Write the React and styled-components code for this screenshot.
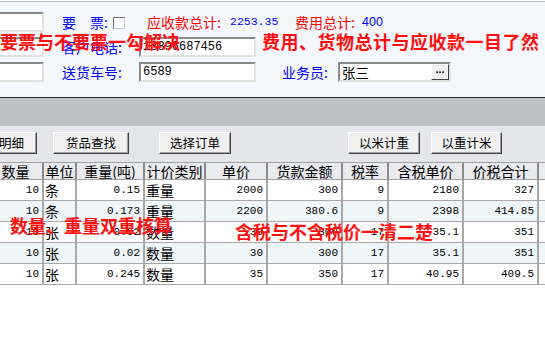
import React from 'react';
import styled, { createGlobalStyle } from 'styled-components';

const Global = createGlobalStyle`
  html, body { margin: 0; padding: 0; background: #fff; }
  body { width: 545px; height: 354px; overflow: hidden; font-family: "Noto Sans CJK SC", sans-serif; }
  #root { width: 545px; height: 354px; overflow: hidden; }
`;

const Page = styled.div`
  position: relative;
  width: 545px;
  height: 354px;
  overflow: hidden;
  background: #fff;
`;

const Top = styled.section`
  box-sizing: border-box;
  height: 97px;
  margin-top: 1px;
  background: #f4f8fc;
  border-top: 1px solid #b4b8c0;
  border-bottom: 1px solid #303030;
  padding-top: 10px;
`;

const Form = styled.div`
  display: flex;
  flex-direction: column;
  gap: 5px;
  margin-left: -60px;
`;

const FormRow = styled.div`
  display: flex;
  align-items: center;
  height: 20px;
`;

const TextBox = styled.div`
  box-sizing: border-box;
  flex-shrink: 0;
  width: ${p => p.$w}px;
  height: 20px;
  margin-left: ${p => p.$ml || 0}px;
  background: #fff;
  border: 2px solid;
  border-color: #8a8a8a #e2e2e2 #e2e2e2 #8a8a8a;
  display: flex;
  align-items: center;
  padding-left: 2px;
  font-family: ${p => (p.$cjk ? '"Noto Sans CJK SC", sans-serif' : '"Liberation Mono", monospace')};
  font-size: ${p => (p.$cjk ? '13.5px' : '12px')};
  line-height: 16px;
  color: #000;
`;

const DotsButton = styled.div`
  box-sizing: border-box;
  margin-left: auto;
  width: 18px;
  height: 16px;
  background: #f0f0f0;
  border: 1px solid;
  border-color: #fff #404040 #404040 #fff;
  font-family: "Liberation Sans", sans-serif;
  font-weight: 700;
  font-size: 11px;
  line-height: 9px;
  text-align: center;
  color: #000;
`;

const Label = styled.span`
  flex-shrink: 0;
  display: block;
  width: ${p => p.$w}px;
  margin-left: ${p => p.$ml || 0}px;
  color: ${p => (p.$red ? '#ff0000' : '#0000ff')};
  font-family: "Noto Sans CJK SC", sans-serif;
  font-size: 14px;
  line-height: 20px;
  white-space: nowrap;
`;

const Value = styled.span`
  flex-shrink: 0;
  display: block;
  width: ${p => p.$w}px;
  color: #0000ff;
  font-family: ${p => (p.$mono ? '"Liberation Mono", monospace' : '"Liberation Sans", sans-serif')};
  font-size: ${p => (p.$mono ? '11.5px' : '12.5px')};
  line-height: 20px;
  white-space: nowrap;
`;

const Check = styled.span`
  flex-shrink: 0;
  box-sizing: border-box;
  display: block;
  width: 12px;
  height: 12px;
  margin-top: 2px;
  background: #fff;
  border: 1px solid;
  border-color: #707070 #c8c8c8 #c8c8c8 #707070;
`;

const Caption = styled.div`
  height: 28px;
  background: #c0c0c8;
`;

const Toolbar = styled.div`
  box-sizing: border-box;
  height: 36px;
  background: #e4e6ea;
  padding-top: 6px;
  display: flex;
  margin-left: -39px;
`;

const Button = styled.div`
  box-sizing: border-box;
  flex-shrink: 0;
  width: ${p => p.$w}px;
  height: 22px;
  margin-left: ${p => p.$ml || 0}px;
  background: #f0f0f0;
  border: 1px solid;
  border-color: #ffffff #404040 #404040 #ffffff;
  box-shadow: inset -1px -1px 0 #a0a0a0;
  font-family: "Noto Sans CJK SC", sans-serif;
  font-size: 12.5px;
  line-height: 19px;
  text-align: center;
  color: #000;
`;

const cols = [
  { w: 55, num: true },
  { w: 33 },
  { w: 68, num: true },
  { w: 61 },
  { w: 62, num: true },
  { w: 75, num: true },
  { w: 46, num: true },
  { w: 75, num: true },
  { w: 75, num: true },
  { w: 60 },
];

const Grid = styled.div`
  display: grid;
  grid-template-columns: ${cols.map(c => c.w + 'px').join(' ')};
  margin-left: -11px;
  width: max-content;
`;

const HeadCell = styled.div`
  box-sizing: border-box;
  height: 18px;
  background: #e9eaed;
  border-top: 1px solid #a0a0a0;
  border-bottom: 1px solid #a0a0a0;
  border-right: 2px solid #8a8a8a;
  font-family: "Noto Sans CJK SC", sans-serif;
  font-size: 14px;
  line-height: 16px;
  text-align: center;
  color: #000;
  white-space: nowrap;
  overflow: hidden;
`;

const Cell = styled.div`
  box-sizing: border-box;
  height: 21px;
  background: ${p => (p.$tint ? '#eef6f7' : '#ffffff')};
  border-bottom: 1px solid #a8a8a8;
  border-right: 2px solid #a8a8a8;
  display: flex;
  align-items: center;
  justify-content: ${p => (p.$num ? 'flex-end' : 'flex-start')};
  padding: ${p => (p.$num ? '0 3px 0 0' : '0 0 0 1px')};
  font-family: ${p => (p.$num ? '"Liberation Mono", monospace' : '"Noto Sans CJK SC", sans-serif')};
  font-size: ${p => (p.$num ? '11px' : '14px')};
  color: #000;
  white-space: nowrap;
  overflow: hidden;
`;

const Note = styled.div`
  position: absolute;
  left: ${p => p.$x}px;
  top: ${p => p.$y}px;
  color: #ff1010;
  font-family: "Noto Sans CJK SC", sans-serif;
  font-weight: 700;
  font-size: 18px;
  letter-spacing: ${p => p.$ls || 0}px;
  line-height: 18px;
  white-space: nowrap;
  z-index: 2;
`;

const headers = ['数量', '单位', '重量(吨)', '计价类别', '单价', '货款金额', '税率', '含税单价', '价税合计', ''];

const rows = [
  ['10', '条', '0.15', '重量', '2000', '300', '9', '2180', '327', ''],
  ['10', '条', '0.173', '重量', '2200', '380.6', '9', '2398', '414.85', ''],
  ['10', '张', '0.02', '数量', '30', '300', '17', '35.1', '351', ''],
  ['10', '张', '0.02', '数量', '30', '300', '17', '35.1', '351', ''],
  ['10', '张', '0.245', '数量', '35', '350', '17', '40.95', '409.5', ''],
];

export default function App() {
  return (
    <Page>
      <Global />
      <Top>
        <Form>
          <FormRow>
            <TextBox $w={104} />
            <Label $ml={18} $w={51}>要　票:</Label>
            <Check />
            <Label $red $ml={22} $w={83}>应收款总计:</Label>
            <Value $mono $w={65}>2253.35</Value>
            <Label $red $w={67}>费用总计:</Label>
            <Value $w={40}>400</Value>
          </FormRow>
          <FormRow>
            <TextBox $w={104} />
            <Label $ml={18} $w={77}>客户电话:</Label>
            <TextBox $w={117}>13896687456</TextBox>
          </FormRow>
          <FormRow>
            <TextBox $w={104} />
            <Label $ml={18} $w={77}>送货车号:</Label>
            <TextBox $w={117}>6589</TextBox>
            <Label $ml={26} $w={56}>业务员:</Label>
            <TextBox $w={113} $cjk>
              张三
              <DotsButton>...</DotsButton>
            </TextBox>
          </FormRow>
        </Form>
      </Top>
      <Caption />
      <Toolbar>
        <Button $w={76}>添加明细</Button>
        <Button $w={76} $ml={16}>货品查找</Button>
        <Button $w={72} $ml={30}>选择订单</Button>
        <Button $w={72} $ml={117}>以米计重</Button>
        <Button $w={71} $ml={11}>以重计米</Button>
      </Toolbar>
      <Grid>
        {headers.map((h, i) => (
          <HeadCell key={'h' + i}>{h}</HeadCell>
        ))}
        {rows.map((r, ri) =>
          r.map((v, ci) => (
            <Cell key={ri + '-' + ci} $num={cols[ci].num} $tint={ri % 2 === 1}>
              {v}
            </Cell>
          ))
        )}
      </Grid>
      <Note $x={0} $y={32}>要票与不要票一勾解决</Note>
      <Note $x={262} $y={32} $ls={0.5}>费用、货物总计与应收款一目了然</Note>
      <Note $x={10} $y={216}>数量、重量双重核算</Note>
      <Note $x={235} $y={222}>含税与不含税价一清二楚</Note>
    </Page>
  );
}
